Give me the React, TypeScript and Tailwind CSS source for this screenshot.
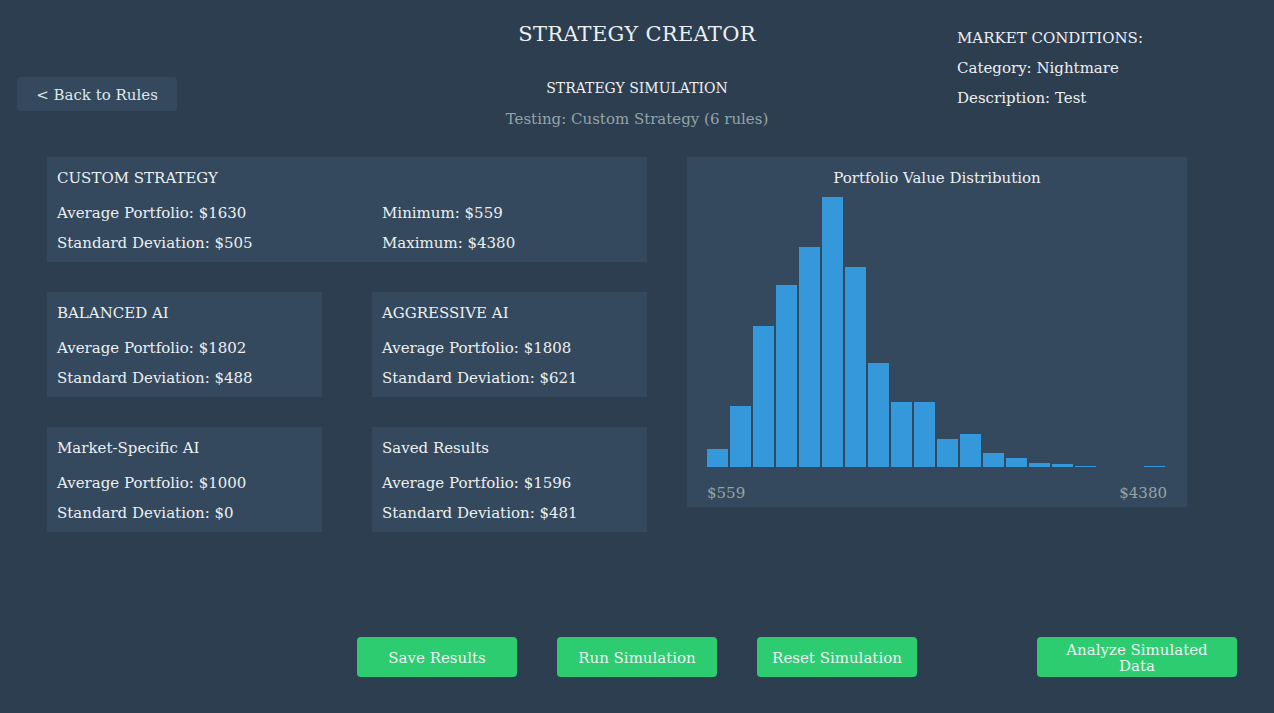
import React from "react";

type AiResult = {
  name: string;
  average: number;
  deviation: number;
};

const aiResults: AiResult[] = [
  { name: "BALANCED AI", average: 1802, deviation: 488 },
  { name: "AGGRESSIVE AI", average: 1808, deviation: 621 },
  { name: "Market-Specific AI", average: 1000, deviation: 0 },
  { name: "Saved Results", average: 1596, deviation: 481 },
];

// bar heights in px for each histogram bin
const bins = [18, 61, 141, 182, 220, 270, 200, 104, 65, 65, 28, 33, 14, 9, 4, 3, 1, 0, 0, 1];

function StatPanel({ result }: { result: AiResult }) {
  return (
    <div className="bg-[#34495e] h-[105px] px-[10px] pt-[11px]">
      <div className="text-[15px] leading-[20px]">{result.name}</div>
      <div className="mt-[15px] text-[15px] leading-[20px]">Average Portfolio: ${result.average}</div>
      <div className="mt-[10px] text-[15px] leading-[20px]">Standard Deviation: ${result.deviation}</div>
    </div>
  );
}

function Histogram() {
  return (
    <div className="bg-[#34495e] w-[500px] h-[350px] px-[20px] pt-[11px] flex flex-col">
      <div className="text-center text-[15px] leading-[20px]">Portfolio Value Distribution</div>
      <div className="mt-[6px] h-[273px] shrink-0 flex items-end gap-[2px]">
        {bins.map((h, i) => (
          <div key={i} className="w-[21px] bg-[#3498db]" style={{ height: h }} />
        ))}
      </div>
      <div className="mt-[16px] flex justify-between text-[15px] leading-[20px] text-[#95a5a6]">
        <span>$559</span>
        <span>$4380</span>
      </div>
    </div>
  );
}

export default function App() {
  return (
    <div
      className="w-[1274px] h-[713px] bg-[#2c3e50] text-[#ecf0f1] flex flex-col"
      style={{ fontFamily: '"DejaVu Serif", "Liberation Serif", serif' }}
    >
      <header className="grid grid-cols-[320px_634px_320px] h-[157px]">
        <div className="pl-[17px] pt-[77px]">
          <button
            type="button"
            className="w-[160px] h-[34px] pt-[3px] rounded-[4px] bg-[#34495e] text-[15px] text-[#dfe6e9]"
          >
            &lt; Back to Rules
          </button>
        </div>
        <div className="flex flex-col items-center pt-[21px]">
          <h1 className="text-[21px] leading-[26px] tracking-[0.3px]">STRATEGY CREATOR</h1>
          <div className="mt-[31px] text-[14px] leading-[20px]">STRATEGY SIMULATION</div>
          <div className="mt-[11px] text-[15px] leading-[20px] text-[#95a5a6]">
            Testing: Custom Strategy (6 rules)
          </div>
        </div>
        <div className="pl-[3px] pt-[28px] text-[15px] leading-[20px] flex flex-col gap-[10px]">
          <div>MARKET CONDITIONS:</div>
          <div>Category: Nightmare</div>
          <div>Description: Test</div>
        </div>
      </header>

      <main className="flex gap-[40px] pl-[47px]">
        <div className="w-[600px] flex flex-col gap-[30px]">
          <div className="bg-[#34495e] h-[105px] px-[10px] pt-[11px]">
            <div className="text-[15px] leading-[20px]">CUSTOM STRATEGY</div>
            <div className="mt-[15px] grid grid-cols-[325px_1fr] gap-y-[10px] text-[15px] leading-[20px]">
              <div>Average Portfolio: $1630</div>
              <div>Minimum: $559</div>
              <div>Standard Deviation: $505</div>
              <div>Maximum: $4380</div>
            </div>
          </div>
          <div className="grid grid-cols-2 gap-x-[50px] gap-y-[30px]">
            {aiResults.map((r) => (
              <StatPanel key={r.name} result={r} />
            ))}
          </div>
        </div>
        <Histogram />
      </main>

      <footer className="mt-auto mb-[36px] flex pl-[357px] gap-[40px] text-[15px]">
        {["Save Results", "Run Simulation", "Reset Simulation"].map((label) => (
          <button
            key={label}
            type="button"
            className="w-[160px] h-[40px] pt-[3px] rounded-[4px] bg-[#2ecc71] text-[#ecf0f1]"
          >
            {label}
          </button>
        ))}
        <button
          type="button"
          className="ml-[80px] w-[200px] h-[40px] pt-[2px] rounded-[4px] bg-[#2ecc71] text-[#ecf0f1] leading-[16px]"
        >
          Analyze Simulated
          <br />
          Data
        </button>
      </footer>
    </div>
  );
}
